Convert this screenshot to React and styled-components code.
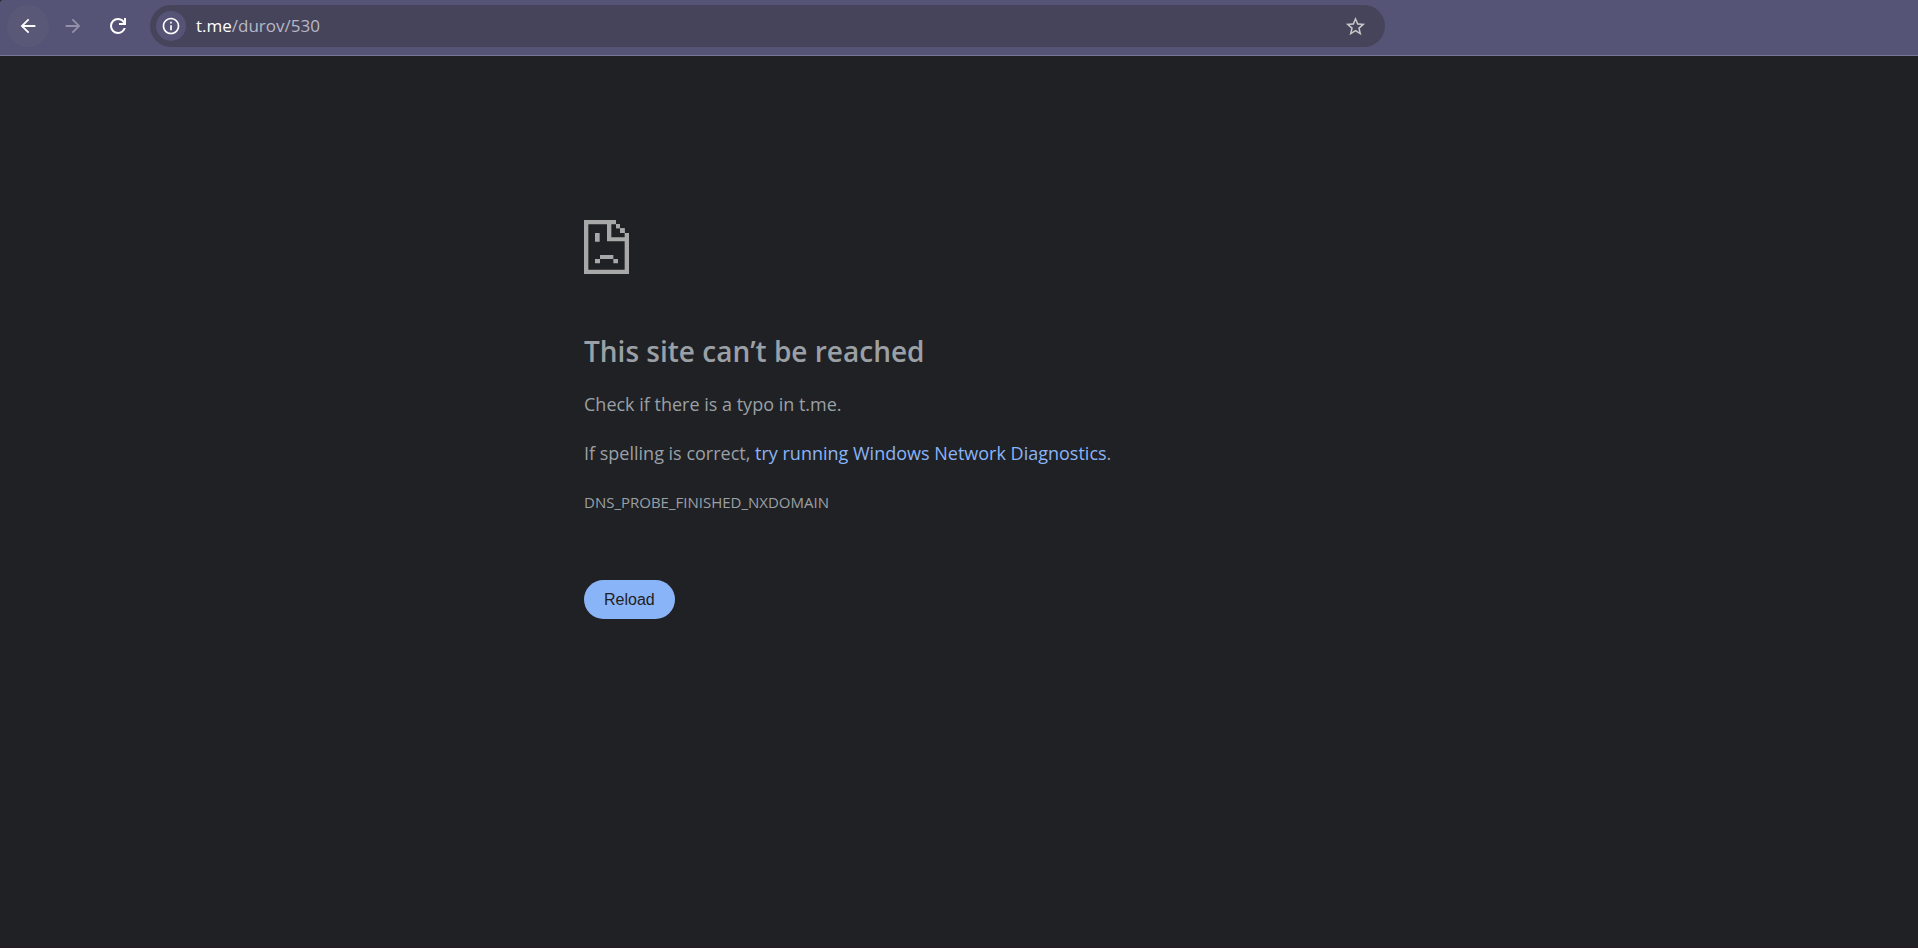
import React from 'react';
import styled, { createGlobalStyle } from 'styled-components';

const GlobalStyle = createGlobalStyle`
    * {
        box-sizing: border-box;
    }

    body {
        margin: 0;
        background-color: #202124;
        font-family: "Segoe UI", "Open Sans", "Noto Sans", sans-serif;
    }
`

const Page = styled.div`
    display: flex;
    flex-direction: column;
    min-height: 100vh;
    border-bottom: 2px solid #231d22;
`

const Toolbar = styled.header`
    display: flex;
    align-items: center;
    padding: 5px 7px 8px;
    border-top-left-radius: 3px;
    background-color: #565476;
    border-bottom: 1px solid #78769a;
`

const NavButton = styled.button`
    display: flex;
    align-items: center;
    justify-content: center;
    width: 42px;
    height: 42px;
    margin-right: 3px;
    padding: 0;
    border: none;
    border-radius: 50%;
    color: ${({ disabled }) => (disabled ? '#9391a8' : '#fff')};
    background-color: ${({ $active }) => ($active ? '#5a5877' : 'transparent')};
`

const AddressBar = styled.div`
    display: flex;
    align-items: center;
    flex: 0 1 1235px;
    height: 42px;
    margin-left: 8px;
    padding: 0 18px 0 6px;
    border-radius: 21px;
    background-color: #45445a;
`

const SiteInfo = styled.button`
    display: flex;
    align-items: center;
    justify-content: center;
    width: 30px;
    height: 30px;
    padding: 0;
    border: none;
    border-radius: 50%;
    color: #fff;
    background-color: #565476;
`

const Address = styled.div`
    flex: 1;
    padding-left: 10px;
    color: #b9b8c6;
    font-size: 17px;
    line-height: 24px;

    span {
        color: #fff;
    }
`

const StarButton = styled.button`
    display: flex;
    padding: 0;
    border: none;
    color: #c7c7c7;
    background-color: transparent;
`

const Content = styled.main`
    width: 100%;
    max-width: 750px;
    margin: 0 auto;
    padding-top: 164px;
    color: #9aa0a6;
    font-size: 18px;
    line-height: 28px;

    h1 {
        margin: 58px 0 20px;
        font-size: 28px;
        font-weight: 600;
        line-height: 38px;
    }

    p {
        margin: 0 0 21px;
    }

    a {
        color: #8ab4f8;
        text-decoration: none;
    }
`

const SadFile = styled.svg`
    display: block;
    width: 45px;
    height: 54px;
    fill: #a8a8a8;
`

const ErrorCode = styled.div`
    font-size: 15px;
    line-height: 28px;
`

const ReloadButton = styled.button`
    margin-top: 64px;
    padding: 0 20px;
    border: none;
    border-radius: 20px;
    color: #202124;
    background-color: #8ab4f8;
    font-family: "Liberation Sans", Arial, sans-serif;
    font-size: 16px;
    line-height: 39px;
`

function Icon({ size = 20, children }) {
    return (
        <svg width={size} height={size} viewBox="0 0 24 24" fill="currentColor" aria-hidden="true">
            {children}
        </svg>
    );
}

function App() {
    return (
        <Page>
            <GlobalStyle />
            <Toolbar>
                <NavButton $active aria-label="Back">
                    <Icon size={22}><path d="M20 11H7.83l5.59-5.59L12 4l-8 8 8 8 1.41-1.41L7.83 13H20v-2z" /></Icon>
                </NavButton>
                <NavButton disabled aria-label="Forward">
                    <Icon size={22}><path d="M12 4l-1.41 1.41L16.17 11H4v2h12.17l-5.58 5.59L12 20l8-8-8-8z" /></Icon>
                </NavButton>
                <NavButton aria-label="Reload">
                    <Icon size={24}><path d="M12 20q-3.35 0-5.675-2.325T4 12t2.325-5.675T12 4q1.725 0 3.3.712T18 6.75V4h2v7h-7V9h4.2q-.8-1.4-2.187-2.2T12 6Q9.5 6 7.75 7.75T6 12t1.75 4.25T12 18q1.925 0 3.475-1.1T17.65 14h2.1q-.7 2.65-2.85 4.325T12 20" /></Icon>
                </NavButton>
                <AddressBar>
                    <SiteInfo aria-label="View site information">
                        <Icon><path d="M11 17h2v-6h-2v6zm1-15C6.48 2 2 6.48 2 12s4.48 10 10 10 10-4.48 10-10S17.52 2 12 2zm0 18c-4.41 0-8-3.59-8-8s3.59-8 8-8 8 3.59 8 8-3.59 8-8 8zM11 9h2V7h-2v2z" /></Icon>
                    </SiteInfo>
                    <Address><span>t.me</span>/durov/530</Address>
                    <StarButton aria-label="Bookmark this tab">
                        <Icon size={23}><path d="M22 9.24l-7.19-.62L12 2 9.19 8.63 2 9.24l5.46 4.73L5.82 21 12 17.27 18.18 21l-1.63-7.03L22 9.24zM12 15.4l-3.76 2.27 1-4.28-3.32-2.88 4.38-.38L12 6.1l1.71 4.04 4.38.38-3.32 2.88 1 4.28L12 15.4z" /></Icon>
                    </StarButton>
                </AddressBar>
            </Toolbar>
            <Content>
                <SadFile viewBox="0 0 135 162" aria-hidden="true">
                    <path fillRule="evenodd" d="M0 0H96V12H108V25H122V39H135V162H0ZM13 13V149H122V64H69V13ZM82 13V52H122V39H108V25H96V13Z" />
                    <path d="M96 12h12v13H96zM108 25h14v14h-14zM33 39h14v26H33zM48 105h40v12H48zM33 117h15v13H33zM88 117h14v13H88z" />
                </SadFile>
                <h1>This site can’t be reached</h1>
                <p>Check if there is a typo in t.me.</p>
                <p>If spelling is correct, <a href="#diagnostics">try running Windows Network Diagnostics</a>.</p>
                <ErrorCode>DNS_PROBE_FINISHED_NXDOMAIN</ErrorCode>
                <ReloadButton>Reload</ReloadButton>
            </Content>
        </Page>
    );
}

export default App;
